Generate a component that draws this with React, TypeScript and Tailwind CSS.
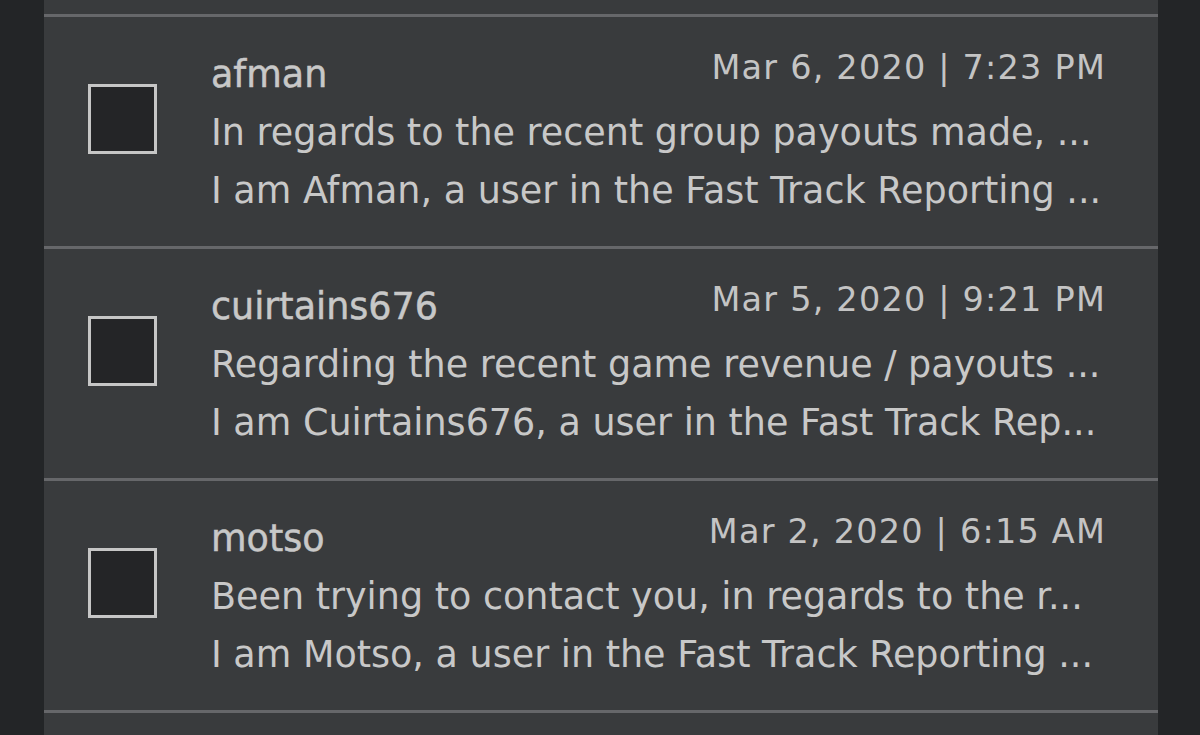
import React from "react";

const rows = [
  {
    name: "afman",
    date: "Mar 6, 2020 | 7:23 PM",
    subject: "In regards to the recent group payouts made, ...",
    body: "I am Afman, a user in the Fast Track Reporting ...",
  },
  {
    name: "cuirtains676",
    date: "Mar 5, 2020 | 9:21 PM",
    subject: "Regarding the recent game revenue / payouts ...",
    body: "I am Cuirtains676, a user in the Fast Track Rep...",
  },
  {
    name: "motso",
    date: "Mar 2, 2020 | 6:15 AM",
    subject: "Been trying to contact you, in regards to the r...",
    body: "I am Motso, a user in the Fast Track Reporting ...",
  },
];

export default function App() {
  return (
    <div
      className="h-[735px] w-[1200px] overflow-hidden bg-[#232527] pl-[44px]"
      style={{ fontFamily: "'DejaVu Sans', Lato, sans-serif" }}
    >
      <div className="flex h-full w-[1114px] flex-col bg-[#393b3d]">
        <div className="h-[14px] shrink-0 border-b-[3px] border-[#66676a] box-content" />
        {rows.map((r) => (
          <div
            key={r.name}
            className="flex h-[229px] shrink-0 items-start border-b-[3px] border-[#66676a] pl-[44px] pr-[52px] box-content"
          >
            <div className="mt-[67px] h-[70px] w-[69px] shrink-0 border-[3px] border-[#c6c6c6] bg-[#242527]" />
            <div className="ml-[54px] flex min-w-0 flex-1 flex-col pt-[29px] text-[36.5px] leading-[58px] text-[#c8c8c8]">
              <div className="flex items-start justify-between">
                <span className="[-webkit-text-stroke:0.5px_#c8c8c8]">{r.name}</span>
                <span className="-translate-y-[7px] whitespace-nowrap text-[33.5px] tracking-[1.2px] text-[#c4c4c4]">
                  {r.date}
                </span>
              </div>
              <div className="whitespace-nowrap">{r.subject}</div>
              <div className="whitespace-nowrap">{r.body}</div>
            </div>
          </div>
        ))}
      </div>
    </div>
  );
}
